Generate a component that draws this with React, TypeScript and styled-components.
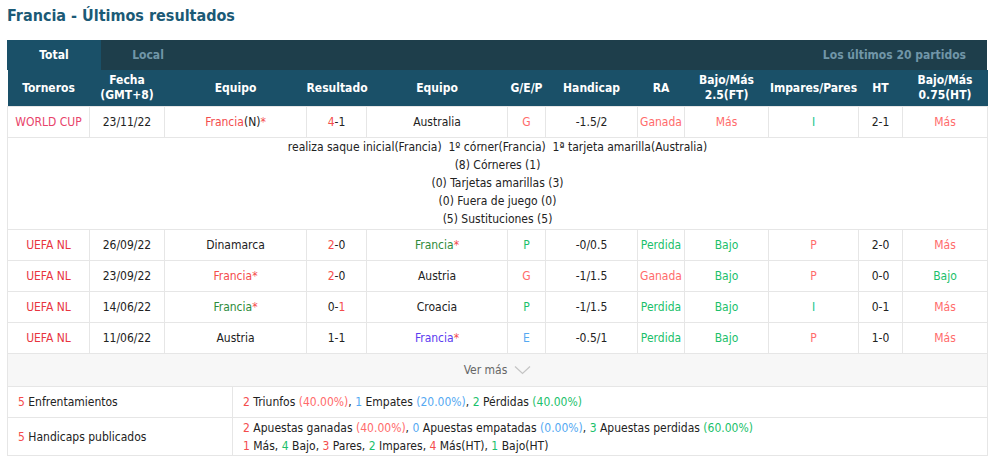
import React from 'react';
import styled, { createGlobalStyle } from 'styled-components';

const Global = createGlobalStyle`
  body {
    margin: 0;
    background: #fff;
    font-family: "DejaVu Sans Condensed", "DejaVu Sans", sans-serif;
    font-size: 12px;
    color: #222;
  }
`;

const RED = '#f44c4c';
const SOFT_RED = '#ff6b6b';
const GREEN = '#1bbf6b';
const BLUE = '#55a9f2';

const Page = styled.div`
  padding: 6px 8px 0 7px;
  width: 980px;
`;

const Title = styled.h2`
  margin: 0 0 14px;
  font-size: 16px;
  font-weight: bold;
  color: #1b5a76;
  line-height: 20px;
`;

const TabBar = styled.div`
  display: flex;
  height: 30px;
  background: #1e3e4b;
  align-items: stretch;
`;

const Tab = styled.div<{ $active?: boolean }>`
  width: 94px;
  display: flex;
  align-items: center;
  justify-content: center;
  font-weight: bold;
  background: ${p => (p.$active ? '#1a5068' : 'transparent')};
  color: ${p => (p.$active ? '#fff' : '#7196a8')};
`;

const TabNote = styled.div`
  margin-left: auto;
  padding-right: 21px;
  display: flex;
  align-items: center;
  font-weight: bold;
  color: #7196a8;
`;

const Table = styled.table`
  width: 980px;
  border-collapse: collapse;
  table-layout: fixed;
  text-align: center;
`;

const Th = styled.th`
  background: #1a5068;
  color: #fff;
  font-weight: bold;
  height: 36px;
  padding: 0;
  line-height: 15px;
`;

const Td = styled.td<{ $c?: string }>`
  border: 1px solid #e6e6e6;
  height: 30px;
  padding: 0;
  color: ${p => p.$c || '#222'};
`;

const DetailCell = styled.td`
  border: 1px solid #e6e6e6;
  padding: 0 0 1px;
  line-height: 18px;
  text-align: center;
`;

const MoreCell = styled.td`
  border: 1px solid #e6e6e6;
  background: #f7f7f7;
  height: 32px;
  padding: 0;
  color: #666;
`;

const MoreInner = styled.span`
  display: inline-flex;
  align-items: center;
  gap: 7px;
`;

const Summary = styled.table`
  width: 980px;
  border-collapse: collapse;
  table-layout: fixed;
`;

const SumTd = styled.td<{ $h: number }>`
  border: 1px solid #e6e6e6;
  border-top: none;
  height: ${p => p.$h}px;
  padding: 0 10px;
  line-height: 18px;
`;

const C = styled.span<{ $c: string }>`
  color: ${p => p.$c};
`;

const widths = [82, 75, 142, 60, 141, 38, 92, 47, 84, 90, 44, 85];

type Seg = [string, string?];
type Row = {
  league: string;
  leagueColor: string;
  date: string;
  home: Seg[];
  score: Seg[];
  away: Seg[];
  gep: Seg;
  hcp: string;
  ra: Seg;
  ou: Seg;
  oe: Seg;
  ht: string;
  ouHt: Seg;
};

const Segs = ({ s }: { s: Seg[] }) => (
  <>
    {s.map(([t, c], i) => (
      <C key={i} $c={c || '#222'}>
        {t}
      </C>
    ))}
  </>
);

const rows: Row[] = [
  {
    league: 'WORLD CUP', leagueColor: '#e8436a', date: '23/11/22',
    home: [['Francia', RED], ['(N)'], ['*', RED]],
    score: [['4', RED], ['-1']],
    away: [['Australia']],
    gep: ['G', SOFT_RED], hcp: '-1.5/2', ra: ['Ganada', SOFT_RED], ou: ['Más', SOFT_RED],
    oe: ['I', '#12c48a'], ht: '2-1', ouHt: ['Más', SOFT_RED],
  },
  {
    league: 'UEFA NL', leagueColor: '#e8353f', date: '26/09/22',
    home: [['Dinamarca']],
    score: [['2', RED], ['-0']],
    away: [['Francia', '#2e8b3a'], ['*', RED]],
    gep: ['P', GREEN], hcp: '-0/0.5', ra: ['Perdida', GREEN], ou: ['Bajo', GREEN],
    oe: ['P', SOFT_RED], ht: '2-0', ouHt: ['Más', SOFT_RED],
  },
  {
    league: 'UEFA NL', leagueColor: '#e8353f', date: '23/09/22',
    home: [['Francia', RED], ['*', RED]],
    score: [['2', RED], ['-0']],
    away: [['Austria']],
    gep: ['G', SOFT_RED], hcp: '-1/1.5', ra: ['Ganada', SOFT_RED], ou: ['Bajo', GREEN],
    oe: ['P', SOFT_RED], ht: '0-0', ouHt: ['Bajo', GREEN],
  },
  {
    league: 'UEFA NL', leagueColor: '#e8353f', date: '14/06/22',
    home: [['Francia', '#2e8b3a'], ['*', RED]],
    score: [['0-'], ['1', RED]],
    away: [['Croacia']],
    gep: ['P', GREEN], hcp: '-1/1.5', ra: ['Perdida', GREEN], ou: ['Bajo', GREEN],
    oe: ['I', '#12c48a'], ht: '0-1', ouHt: ['Más', SOFT_RED],
  },
  {
    league: 'UEFA NL', leagueColor: '#e8353f', date: '11/06/22',
    home: [['Austria']],
    score: [['1-1']],
    away: [['Francia', '#5b3cf0'], ['*', RED]],
    gep: ['E', BLUE], hcp: '-0.5/1', ra: ['Perdida', GREEN], ou: ['Bajo', GREEN],
    oe: ['P', SOFT_RED], ht: '1-0', ouHt: ['Más', SOFT_RED],
  },
];

const detail = [
  'realiza saque inicial(Francia)\u00a0\u00a01º córner(Francia)\u00a0\u00a01ª tarjeta amarilla(Australia)',
  '(8) Córneres (1)',
  '(0) Tarjetas amarillas (3)',
  '(0) Fuera de juego (0)',
  '(5) Sustituciones (5)',
];

const Chevron = () => (
  <svg width="17" height="10" viewBox="0 0 17 10" fill="none">
    <path d="M1 1.5L8.5 8.5L16 1.5" stroke="#c4c4c4" strokeWidth="1.2" />
  </svg>
);

const MatchRow = ({ r }: { r: Row }) => (
  <tr>
    <Td $c={r.leagueColor}>{r.league}</Td>
    <Td>{r.date}</Td>
    <Td><Segs s={r.home} /></Td>
    <Td><Segs s={r.score} /></Td>
    <Td><Segs s={r.away} /></Td>
    <Td $c={r.gep[1]}>{r.gep[0]}</Td>
    <Td>{r.hcp}</Td>
    <Td $c={r.ra[1]}>{r.ra[0]}</Td>
    <Td $c={r.ou[1]}>{r.ou[0]}</Td>
    <Td $c={r.oe[1]}>{r.oe[0]}</Td>
    <Td>{r.ht}</Td>
    <Td $c={r.ouHt[1]}>{r.ouHt[0]}</Td>
  </tr>
);

export default function App() {
  return (
    <Page>
      <Global />
      <Title>Francia - Últimos resultados</Title>
      <TabBar>
        <Tab $active>Total</Tab>
        <Tab>Local</Tab>
        <TabNote>Los últimos 20 partidos</TabNote>
      </TabBar>
      <Table>
        <colgroup>
          {widths.map((w, i) => (
            <col key={i} style={{ width: w }} />
          ))}
        </colgroup>
        <thead>
          <tr>
            <Th>Torneros</Th>
            <Th>Fecha<br />(GMT+8)</Th>
            <Th>Equipo</Th>
            <Th>Resultado</Th>
            <Th>Equipo</Th>
            <Th>G/E/P</Th>
            <Th>Handicap</Th>
            <Th>RA</Th>
            <Th>Bajo/Más<br />2.5(FT)</Th>
            <Th>Impares/Pares</Th>
            <Th>HT</Th>
            <Th>Bajo/Más<br />0.75(HT)</Th>
          </tr>
        </thead>
        <tbody>
          <MatchRow r={rows[0]} />
          <tr>
            <DetailCell colSpan={12}>
              {detail.map((l, i) => (
                <div key={i}>{l}</div>
              ))}
            </DetailCell>
          </tr>
          {rows.slice(1).map((r, i) => (
            <MatchRow key={i} r={r} />
          ))}
          <tr>
            <MoreCell colSpan={12}>
              <MoreInner>Ver más <Chevron /></MoreInner>
            </MoreCell>
          </tr>
        </tbody>
      </Table>
      <Summary>
        <colgroup>
          <col style={{ width: 225 }} />
          <col style={{ width: 755 }} />
        </colgroup>
        <tbody>
          <tr>
            <SumTd $h={30}><C $c={RED}>5</C> Enfrentamientos</SumTd>
            <SumTd $h={30}>
              <C $c={RED}>2</C> Triunfos <C $c={SOFT_RED}>(40.00%)</C>,{' '}
              <C $c={BLUE}>1</C> Empates <C $c={BLUE}>(20.00%)</C>,{' '}
              <C $c={GREEN}>2</C> Pérdidas <C $c={GREEN}>(40.00%)</C>
            </SumTd>
          </tr>
          <tr>
            <SumTd $h={37}><C $c={RED}>5</C> Handicaps publicados</SumTd>
            <SumTd $h={37}>
              <div>
                <C $c={RED}>2</C> Apuestas ganadas <C $c={SOFT_RED}>(40.00%)</C>,{' '}
                <C $c={BLUE}>0</C> Apuestas empatadas <C $c={BLUE}>(0.00%)</C>,{' '}
                <C $c={GREEN}>3</C> Apuestas perdidas <C $c={GREEN}>(60.00%)</C>
              </div>
              <div>
                <C $c={RED}>1</C> Más, <C $c={GREEN}>4</C> Bajo, <C $c={RED}>3</C> Pares,{' '}
                <C $c={GREEN}>2</C> Impares, <C $c={RED}>4</C> Más(HT), <C $c={GREEN}>1</C> Bajo(HT)
              </div>
            </SumTd>
          </tr>
        </tbody>
      </Summary>
    </Page>
  );
}
